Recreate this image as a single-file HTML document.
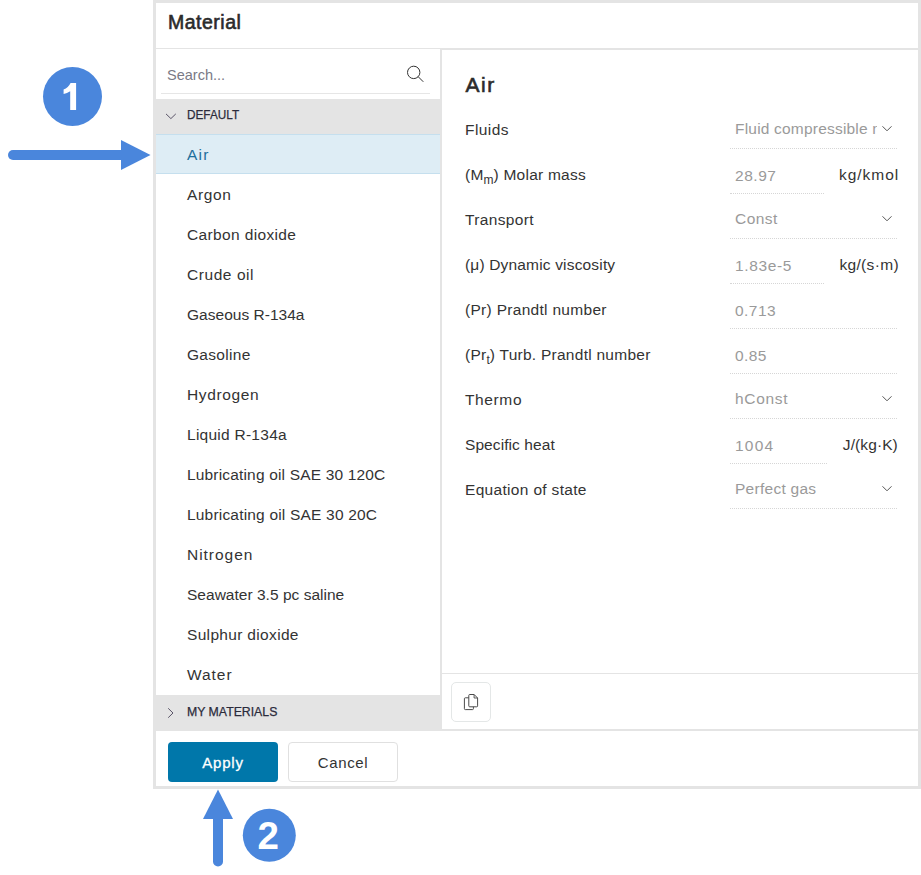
<!DOCTYPE html>
<html><head><meta charset="utf-8">
<style>
*{box-sizing:border-box;margin:0;padding:0}
html,body{width:921px;height:875px;overflow:hidden;background:#fff}
body{position:relative;font-family:"Liberation Sans",sans-serif;color:#333}
.a{position:absolute;white-space:nowrap}
.t15{font-size:15.5px;line-height:20px;letter-spacing:0.2px}
.lbl{left:465px;color:#333}
.val{left:735px;color:#9a9a9a;margin-top:-1px}
.unit{color:#333}
.item{left:187px;color:#333}
.ul{position:absolute;height:1px;border-top:1px dotted #d6d6d6;left:730px}
.chev{position:absolute;width:12px;height:8px}
</style></head><body>
<!-- dialog frame -->
<div class="a" style="left:153px;top:0;width:768px;height:789px;border:3px solid #e4e4e4"></div>
<!-- header -->
<div class="a" style="left:168px;top:11px;font-size:19.5px;line-height:22px;-webkit-text-stroke:0.6px #2b2b2b;letter-spacing:0.5px;color:#2b2b2b">Material</div>
<div class="a" style="left:156px;top:48px;width:762px;height:1px;background:#e4e4e4"></div>
<!-- right panel top border -->
<div class="a" style="left:442px;top:49px;width:476px;height:1px;background:#e4e4e4"></div>
<!-- divider -->
<div class="a" style="left:440px;top:49px;width:2px;height:681px;background:#e4e4e4"></div>
<!-- footer top line -->
<div class="a" style="left:156px;top:729px;width:762px;height:2px;background:#e4e4e4"></div>

<!-- search -->
<div class="a" style="left:167px;top:65px;font-size:14.5px;line-height:20px;color:#7a7a86">Search...</div>
<div class="a" style="left:161px;top:93px;width:269px;height:1px;background:#e6e6e6"></div>
<svg class="a" style="left:404px;top:63px" width="22" height="22" viewBox="0 0 22 22"><circle cx="9.7" cy="9.4" r="6.2" fill="none" stroke="#333" stroke-width="1"/><line x1="14.2" y1="13.7" x2="19.3" y2="18.8" stroke="#333" stroke-width="1"/></svg>

<!-- DEFAULT header -->
<div class="a" style="left:156px;top:99px;width:284px;height:35px;background:#e4e4e4"></div>
<svg class="a" style="left:164px;top:110px" width="14" height="12" viewBox="0 0 14 12"><polyline points="2,3.9 6.9,8.6 11.8,3.9" fill="none" stroke="#5a5468" stroke-width="1"/></svg>
<div class="a" style="left:187px;top:107.2px;font-size:13.5px;line-height:16px;transform:scaleX(0.872);transform-origin:0 0;-webkit-text-stroke:0.25px #2b2b3b;color:#2b2b3b">DEFAULT</div>

<!-- selected Air row -->
<div class="a" style="left:156px;top:134px;width:284px;height:40px;background:#deedf5;border-top:1px solid #c5dfee;border-bottom:1px solid #c5dfee"></div>
<div class="a t15 item" style="top:145px;color:#1f6f9c;letter-spacing:1.2px">Air</div>
<div class="a t15 item" style="top:185px;letter-spacing:0.62px">Argon</div>
<div class="a t15 item" style="top:225px;letter-spacing:0.36px">Carbon dioxide</div>
<div class="a t15 item" style="top:265px;letter-spacing:0.56px">Crude oil</div>
<div class="a t15 item" style="top:305px;letter-spacing:0.02px">Gaseous R-134a</div>
<div class="a t15 item" style="top:345px;letter-spacing:0.3px">Gasoline</div>
<div class="a t15 item" style="top:385px;letter-spacing:0.63px">Hydrogen</div>
<div class="a t15 item" style="top:425px;letter-spacing:0.26px">Liquid R-134a</div>
<div class="a t15 item" style="top:465px;letter-spacing:0.17px">Lubricating oil SAE 30 120C</div>
<div class="a t15 item" style="top:505px;letter-spacing:0.19px">Lubricating oil SAE 30 20C</div>
<div class="a t15 item" style="top:545px;letter-spacing:0.97px">Nitrogen</div>
<div class="a t15 item" style="top:585px;letter-spacing:0.02px">Seawater 3.5 pc saline</div>
<div class="a t15 item" style="top:625px;letter-spacing:0.33px">Sulphur dioxide</div>
<div class="a t15 item" style="top:665px;letter-spacing:0.95px">Water</div>

<!-- MY MATERIALS -->
<div class="a" style="left:156px;top:695px;width:284px;height:34px;background:#e4e4e4"></div>
<svg class="a" style="left:164px;top:706px" width="12" height="14" viewBox="0 0 12 14"><polyline points="4.2,2.3 9,7 4.2,11.7" fill="none" stroke="#5a5468" stroke-width="1"/></svg>
<div class="a" style="left:187px;top:703.5px;font-size:13px;line-height:16px;transform:scaleX(0.945);transform-origin:0 0;-webkit-text-stroke:0.25px #2b2b3b;color:#2b2b3b">MY MATERIALS</div>

<!-- right panel -->
<div class="a" style="left:465.5px;top:72.5px;font-size:21px;line-height:24px;-webkit-text-stroke:0.6px #2b2b2b;letter-spacing:1.6px;color:#2b2b2b">Air</div>

<div class="a t15 lbl" style="top:120px;letter-spacing:0.44px">Fluids</div>
<div class="a t15 val" style="top:120px;width:142px;overflow:hidden;text-overflow:clip">Fluid compressible n</div>
<svg class="chev" style="left:881px;top:124px" viewBox="0 0 12 8"><polyline points="1.5,2.3 6,6.8 10.5,2.3" fill="none" stroke="#555" stroke-width="1"/></svg>
<div class="ul" style="top:148px;width:167px"></div>

<div class="a t15 lbl" style="top:165px;letter-spacing:0.23px">(M<sub style="font-size:12px;vertical-align:-4px;letter-spacing:0">m</sub>) Molar mass</div>
<div class="a t15 val" style="margin-top:1px;top:165px;letter-spacing:0.53px">28.97</div>
<div class="a t15 unit" style="left:839px;top:165px;letter-spacing:0.97px">kg/kmol</div>
<div class="ul" style="top:193px;width:94px"></div>

<div class="a t15 lbl" style="top:210px;letter-spacing:0.35px">Transport</div>
<div class="a t15 val" style="top:210px;letter-spacing:0.45px">Const</div>
<svg class="chev" style="left:881px;top:214px" viewBox="0 0 12 8"><polyline points="1.5,2.3 6,6.8 10.5,2.3" fill="none" stroke="#555" stroke-width="1"/></svg>
<div class="ul" style="top:238px;width:167px"></div>

<div class="a t15 lbl" style="top:255px;letter-spacing:0.17px">(μ) Dynamic viscosity</div>
<div class="a t15 val" style="margin-top:1px;top:255px;letter-spacing:0.63px">1.83e-5</div>
<div class="a t15 unit" style="left:839.4px;top:255px;letter-spacing:0.34px">kg/(s·m)</div>
<div class="ul" style="top:283px;width:94px"></div>

<div class="a t15 lbl" style="top:300px;letter-spacing:0.3px">(Pr) Prandtl number</div>
<div class="a t15 val" style="margin-top:1px;top:300px;letter-spacing:0.45px">0.713</div>
<div class="ul" style="top:328px;width:167px"></div>

<div class="a t15 lbl" style="top:345px;letter-spacing:0.26px">(Pr<sub style="font-size:12px;vertical-align:-4px;letter-spacing:0">t</sub>) Turb. Prandtl number</div>
<div class="a t15 val" style="margin-top:1px;top:345px;letter-spacing:0.37px">0.85</div>
<div class="ul" style="top:373px;width:167px"></div>

<div class="a t15 lbl" style="top:390px;letter-spacing:0.62px">Thermo</div>
<div class="a t15 val" style="top:390px;letter-spacing:0.7px">hConst</div>
<svg class="chev" style="left:881px;top:394px" viewBox="0 0 12 8"><polyline points="1.5,2.3 6,6.8 10.5,2.3" fill="none" stroke="#555" stroke-width="1"/></svg>
<div class="ul" style="top:418px;width:167px"></div>

<div class="a t15 lbl" style="top:435px;letter-spacing:0.08px">Specific heat</div>
<div class="a t15 val" style="margin-top:1px;top:435px;letter-spacing:1.2px">1004</div>
<div class="a t15 unit" style="left:842.8px;top:435px;letter-spacing:0.1px">J/(kg·K)</div>
<div class="ul" style="top:463px;width:97px"></div>

<div class="a t15 lbl" style="top:480px;letter-spacing:0.32px">Equation of state</div>
<div class="a t15 val" style="top:480px;letter-spacing:0.27px">Perfect gas</div>
<svg class="chev" style="left:881px;top:484px" viewBox="0 0 12 8"><polyline points="1.5,2.3 6,6.8 10.5,2.3" fill="none" stroke="#555" stroke-width="1"/></svg>
<div class="ul" style="top:508px;width:167px"></div>

<!-- right toolbar -->
<div class="a" style="left:442px;top:673px;width:476px;height:1px;background:#e4e4e4"></div>
<div class="a" style="left:451px;top:682px;width:40px;height:40px;border:1px solid #e4e7e7;border-radius:5px"></div>
<svg class="a" style="left:459px;top:690px" width="24" height="24" viewBox="0 0 24 24">
<path d="M9.8 7.8 H6.3 Q5.4 7.8 5.4 8.7 V18.7 Q5.4 19.6 6.3 19.6 H13.5 Q14.4 19.6 14.4 18.7 V16.8" fill="none" stroke="#4a4a4a" stroke-width="1"/>
<path d="M10.7 4.5 H15.1 L18.6 8 V15.9 Q18.6 16.8 17.7 16.8 H10.7 Q9.8 16.8 9.8 15.9 V5.4 Q9.8 4.5 10.7 4.5 Z" fill="none" stroke="#4a4a4a" stroke-width="1"/><path d="M15.1 4.5 V8 H18.6" fill="none" stroke="#4a4a4a" stroke-width="0.9"/>
</svg>

<!-- footer buttons -->
<div class="a" style="left:168px;top:742px;width:110px;height:40px;background:#0077aa;border-radius:4px"></div>
<div class="a" style="left:168px;top:753px;width:110px;text-align:center;font-size:15px;line-height:20px;letter-spacing:0.8px;-webkit-text-stroke:0.3px #fff;color:#fff">Apply</div>
<div class="a" style="left:288px;top:742px;width:110px;height:40px;border:1px solid #e0e0e0;border-radius:4px"></div>
<div class="a" style="left:288px;top:753px;width:110px;text-align:center;font-size:15px;line-height:20px;letter-spacing:0.6px;color:#333">Cancel</div>

<!-- annotations -->
<svg class="a" style="left:0;top:0" width="921" height="875" viewBox="0 0 921 875">
<circle cx="72.5" cy="96.5" r="29.5" fill="#4a86dc"/>
<line x1="13" y1="155" x2="122" y2="155" stroke="#4a86dc" stroke-width="10" stroke-linecap="round"/>
<polygon points="121,140 150.5,155 121,170" fill="#4a86dc"/>
<circle cx="269.3" cy="835.3" r="26.5" fill="#4a86dc"/>
<line x1="218" y1="861.5" x2="218" y2="818" stroke="#4a86dc" stroke-width="10" stroke-linecap="round"/>
<polygon points="203,819 218,789.5 233,819" fill="#4a86dc"/>
<path d="M70.6 82.9 H76.1 V110.1 H70.2 V91.2 Q67 93 63.6 94.1 V89.4 Q68.3 87.6 70.6 82.9 Z" fill="#fff"/>
<text x="268.3" y="849" text-anchor="middle" font-family="Liberation Sans" font-weight="700" font-size="38.5" fill="#fff">2</text>
</svg>

</body></html>
